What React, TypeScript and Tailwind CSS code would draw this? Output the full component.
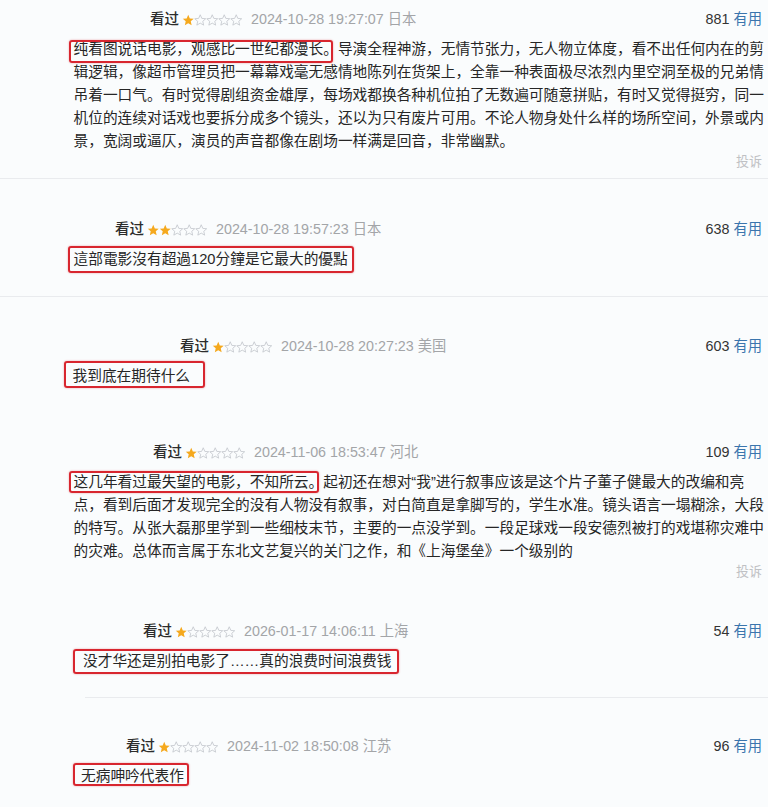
import React from "react";

type Review = {
  wrap: string;
  head: string;
  text: string;
  stars: number;
  date: string;
  count: number;
  mark: string;
  tail?: string;
  more?: string[];
  report?: boolean;
  box: string;
};

const reviews: Review[] = [
  {
    wrap: "h-[179px] pt-[10px] border-b border-[#e9ebee]",
    head: "pl-[150px]",
    text: "pl-[73.5px]",
    stars: 1,
    date: "2024-10-28 19:27:07 日本",
    count: 881,
    mark: "纯看图说话电影，观感比一世纪都漫长。",
    tail: "导演全程神游，无情节张力，无人物立体度，看不出任何内在的剪",
    more: [
      "辑逻辑，像超市管理员把一幕幕戏毫无感情地陈列在货架上，全靠一种表面极尽浓烈内里空洞至极的兄弟情",
      "吊着一口气。有时觉得剧组资金雄厚，每场戏都换各种机位拍了无数遍可随意拼贴，有时又觉得挺穷，同一",
      "机位的连续对话戏也要拆分成多个镜头，还以为只有废片可用。不论人物身处什么样的场所空间，外景或内",
      "景，宽阔或逼仄，演员的声音都像在剧场一样满是回音，非常幽默。",
    ],
    report: true,
    box: "-left-[5px] right-[5px] top-[2px] -bottom-[2px]",
  },
  {
    wrap: "h-[118px] pt-[41px] border-b border-[#e9ebee]",
    head: "pl-[115px]",
    text: "pl-[73.5px]",
    stars: 2,
    date: "2024-10-28 19:57:23 日本",
    count: 638,
    mark: "這部電影沒有超過120分鐘是它最大的優點",
    box: "-left-[5.5px] -right-[6px] -top-[2px] -bottom-[2px]",
  },
  {
    wrap: "h-[123px] pt-[40px]",
    head: "pl-[180px]",
    text: "pl-[72.5px]",
    stars: 1,
    date: "2024-10-28 20:27:23 美国",
    count: 603,
    mark: "我到底在期待什么",
    box: "-left-[8.5px] -right-[15px] -top-[4px] bottom-0",
  },
  {
    wrap: "h-[180px] pt-[23px]",
    head: "pl-[153px]",
    text: "pl-[73.5px]",
    stars: 1,
    date: "2024-11-06 18:53:47 河北",
    count: 109,
    mark: "这几年看过最失望的电影，不知所云。",
    tail: "起初还在想对“我”进行叙事应该是这个片子董子健最大的改编和亮",
    more: [
      "点，看到后面才发现完全的没有人物没有叙事，对白简直是拿脚写的，学生水准。镜头语言一塌糊涂，大段",
      "的特写。从张大磊那里学到一些细枝末节，主要的一点没学到。一段足球戏一段安德烈被打的戏堪称灾难中",
      "的灾难。总体而言属于东北文艺复兴的关门之作，和《上海堡垒》一个级别的",
    ],
    report: true,
    box: "-left-[4.5px] right-[4.5px] top-0 bottom-[1px]",
  },
  {
    wrap: "h-[97px] pt-[22px]",
    head: "pl-[143px]",
    text: "pl-[83px]",
    stars: 1,
    date: "2026-01-17 14:06:11 上海",
    count: 54,
    mark: "没才华还是别拍电影了……真的浪费时间浪费钱",
    box: "-left-[10.5px] -right-[8px] -top-[1px] -bottom-[1px]",
  },
  {
    wrap: "h-[109px] pt-[39px]",
    head: "pl-[126px]",
    text: "pl-[81px]",
    stars: 1,
    date: "2024-11-02 18:50:08 江苏",
    count: 96,
    mark: "无病呻吟代表作",
    box: "-left-[8.5px] -right-[5px] -top-[2px] bottom-[2px]",
  },
];

const STAR = "M12 1.5l3.05 6.95 7.45.65-5.65 4.95 1.7 7.35L12 17.55l-6.55 3.85 1.7-7.35L1.5 9.1l7.45-.65z";

function Stars({ n }: { n: number }) {
  return (
    <svg width="60" height="12" viewBox="0 0 60 12" className="block">
      {[0, 1, 2, 3, 4].map((i) => (
        <g key={i} transform={`translate(${i * 12} 0) scale(0.52)`}>
          {i < n ? (
            <path d={STAR} fill="#f5a91e" />
          ) : (
            <path d={STAR} fill="none" stroke="#c6cacf" strokeWidth="1.7" strokeLinejoin="round" />
          )}
        </g>
      ))}
    </svg>
  );
}

function ReviewBlock({ r }: { r: Review }) {
  return (
    <div className={`box-border flex flex-col ${r.wrap}`}>
      {/* header row */}
      <div className={`flex h-[20px] items-center pr-[6px] ${r.head}`}>
        <span className="text-[14.5px] font-medium text-[#2c2c2c]">看过</span>
        <span className="ml-[3px]">
          <Stars n={r.stars} />
        </span>
        <span className="ml-[9px] text-[14.3px] text-[#a3a5a8]">{r.date}</span>
        <span className="ml-auto text-[14.3px] text-[#333]">
          {r.count} <span className="text-[#3a75ad]">有用</span>
        </span>
      </div>

      {/* body */}
      <div className={`mt-[8px] text-[14.7px] leading-[23px] text-[#262626] ${r.text}`}>
        <div className="whitespace-nowrap">
          <span className="relative inline-block">
            {r.mark}
            <span
              aria-hidden
              className={`absolute rounded-[3px] border-2 border-[#d8262f] shadow-[0_0_2px_rgba(216,38,47,0.45)] ${r.box}`}
            />
          </span>
          {r.tail}
        </div>
        {r.more?.map((line) => (
          <div key={line} className="whitespace-nowrap">
            {line}
          </div>
        ))}
      </div>

      {r.report && (
        <div className="flex h-[18px] items-center justify-end pr-[6px] text-[13px] text-[#bfc1c4]">投诉</div>
      )}
    </div>
  );
}

export default function App() {
  return (
    <div className="h-[807px] w-[768px] overflow-hidden bg-[#fafcfd] font-['Liberation_Sans','Noto_Sans_CJK_SC',sans-serif]">
      {reviews.slice(0, 5).map((r) => (
        <ReviewBlock key={r.date} r={r} />
      ))}
      <div className="ml-[85px] h-px bg-[#e9ebee]" />
      <ReviewBlock r={reviews[5]} />
    </div>
  );
}
